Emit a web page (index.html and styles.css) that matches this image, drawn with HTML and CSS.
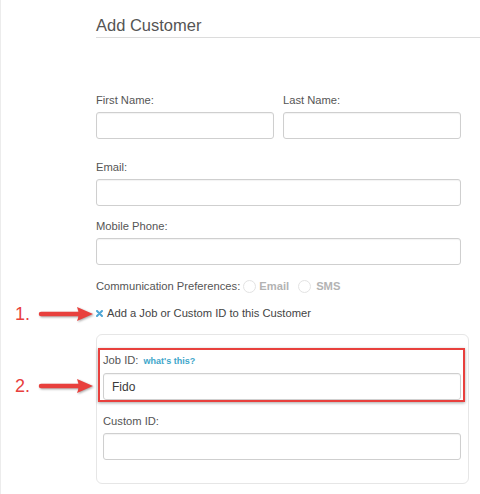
FILE: index.html
```html
<!DOCTYPE html>
<html lang="en">
<head>
<meta charset="utf-8">
<title>Add Customer</title>
<link rel="stylesheet" href="styles.css">
</head>
<body>
<div class="page">
  <h1 class="title">Add Customer</h1>
  <div class="rule"></div>
  <form class="form">
    <div class="row-two">
      <div class="field">
        <label class="label">First Name:</label>
        <input class="input" type="text">
      </div>
      <div class="field">
        <label class="label">Last Name:</label>
        <input class="input" type="text">
      </div>
    </div>
    <div class="field field-email">
      <label class="label">Email:</label>
      <input class="input" type="text">
    </div>
    <div class="field field-phone">
      <label class="label">Mobile Phone:</label>
      <input class="input" type="text">
    </div>
    <div class="prefs">
      <span class="prefs-label">Communication Preferences:</span>
      <span class="radio"></span><span class="opt">Email</span>
      <span class="radio radio-second"></span><span class="opt">SMS</span>
    </div>
    <div class="toggle">
      <svg class="toggle-icon" width="7" height="7" viewBox="0 0 7 7"><path d="M1 1 L6 6 M6 1 L1 6" stroke="#4ea6d6" stroke-width="2" stroke-linecap="round"/></svg>
      <span>Add a Job or Custom ID to this Customer</span>
    </div>
    <div class="panel">
      <div class="highlight"></div>
      <div class="field">
        <label class="label">Job ID: <a class="help">what's this?</a></label>
        <input class="input input-filled" type="text" value="Fido">
      </div>
      <div class="field field-custom">
        <label class="label">Custom ID:</label>
        <input class="input" type="text">
      </div>
    </div>
  </form>
  <div class="callout callout-1">
    <span class="num">1.</span>
    <svg class="arrow" width="56" height="16" viewBox="0 0 56 16"><line x1="3" y1="8" x2="42" y2="8" stroke="#e8403d" stroke-width="4.5" stroke-linecap="round"/><path d="M39 1 L55 8 L39 15 Q42 8 39 1 Z" fill="#e8403d"/></svg>
  </div>
  <div class="callout callout-2">
    <span class="num">2.</span>
    <svg class="arrow" width="56" height="16" viewBox="0 0 56 16"><line x1="3" y1="8" x2="42" y2="8" stroke="#e8403d" stroke-width="4.5" stroke-linecap="round"/><path d="M39 1 L55 8 L39 15 Q42 8 39 1 Z" fill="#e8403d"/></svg>
  </div>
</div>
</body>
</html>
```

FILE: styles.css
```css
* { box-sizing: border-box; }
html, body { margin: 0; padding: 0; background: #fff; }
body {
  font-family: "Liberation Sans", Arial, sans-serif;
  color: #555;
  width: 480px;
  height: 494px;
  overflow: hidden;
}
.page {
  position: relative;
  height: 494px;
  border-left: 1px solid #ececec;
  padding: 15px 0 0 95px;
}
.title {
  margin: 0;
  font-size: 16.5px;
  line-height: 20px;
  font-weight: normal;
  color: #555;
}
.rule {
  margin-top: 2px;
  border-top: 1px solid #dcdcdc;
}
.form {
  width: 365px;
  margin-top: 56px;
}
.row-two {
  display: grid;
  grid-template-columns: 178px 178px;
  column-gap: 9px;
}
.field { display: flex; flex-direction: column; }
.label {
  display: block;
  font-size: 11.2px;
  line-height: 13px;
  margin-bottom: 5px;
  color: #555;
}
.input {
  display: block;
  width: 100%;
  height: 27px;
  margin: 0;
  border: 1px solid #cfcfcf;
  border-radius: 3px;
  box-shadow: inset 0 1px 1px rgba(0,0,0,0.05);
  background: #fff;
  font-family: "Liberation Sans", Arial, sans-serif;
  font-size: 12px;
  color: #333;
  padding: 0 8px;
  outline: none;
}
.input-filled { color: #3a3a3a; }
.field-email { margin-top: 22px; }
.field-phone { margin-top: 14px; }
.prefs {
  margin-top: 15px;
  height: 13px;
  display: flex;
  align-items: center;
  font-size: 11.2px;
  line-height: 13px;
}
.prefs-label { margin-right: 3px; }
.radio {
  width: 13px;
  height: 13px;
  border-radius: 50%;
  border: 1px solid #e3e3e3;
  margin-right: 3px;
  flex: none;
}
.radio-second { margin-left: 9px; margin-right: 5px; }
.opt {
  font-weight: bold;
  color: #b3b3b3;
}
.toggle {
  margin-top: 14px;
  display: flex;
  align-items: center;
  font-size: 11.2px;
  line-height: 13px;
  color: #444;
}
.toggle-icon { margin-right: 4px; flex: none; }
.panel {
  position: relative;
  margin-top: 14px;
  width: 373px;
  border: 1px solid #e6e6e6;
  border-radius: 6px;
  padding: 19px 7px 23px 6px;
}
.help {
  font-size: 9px;
  font-weight: bold;
  color: #3ea6ca;
  margin-left: 2px;
}
.field-custom { margin-top: 15px; }
.highlight {
  position: absolute;
  left: 1px;
  top: 13px;
  width: 367px;
  height: 54px;
  border: 2px solid #e8403d;
  box-shadow: 0 1px 3px rgba(0,0,0,0.35);
  pointer-events: none;
}
.callout {
  position: absolute;
  left: 14px;
  display: flex;
  align-items: center;
  height: 20px;
}
.callout-1 { top: 304px; }
.callout-2 { top: 376px; }
.num {
  font-size: 18px;
  line-height: 20px;
  color: #e8403d;
  width: 23px;
}
.arrow {
  filter: drop-shadow(1px 1px 1px rgba(0,0,0,0.35));
}
```
